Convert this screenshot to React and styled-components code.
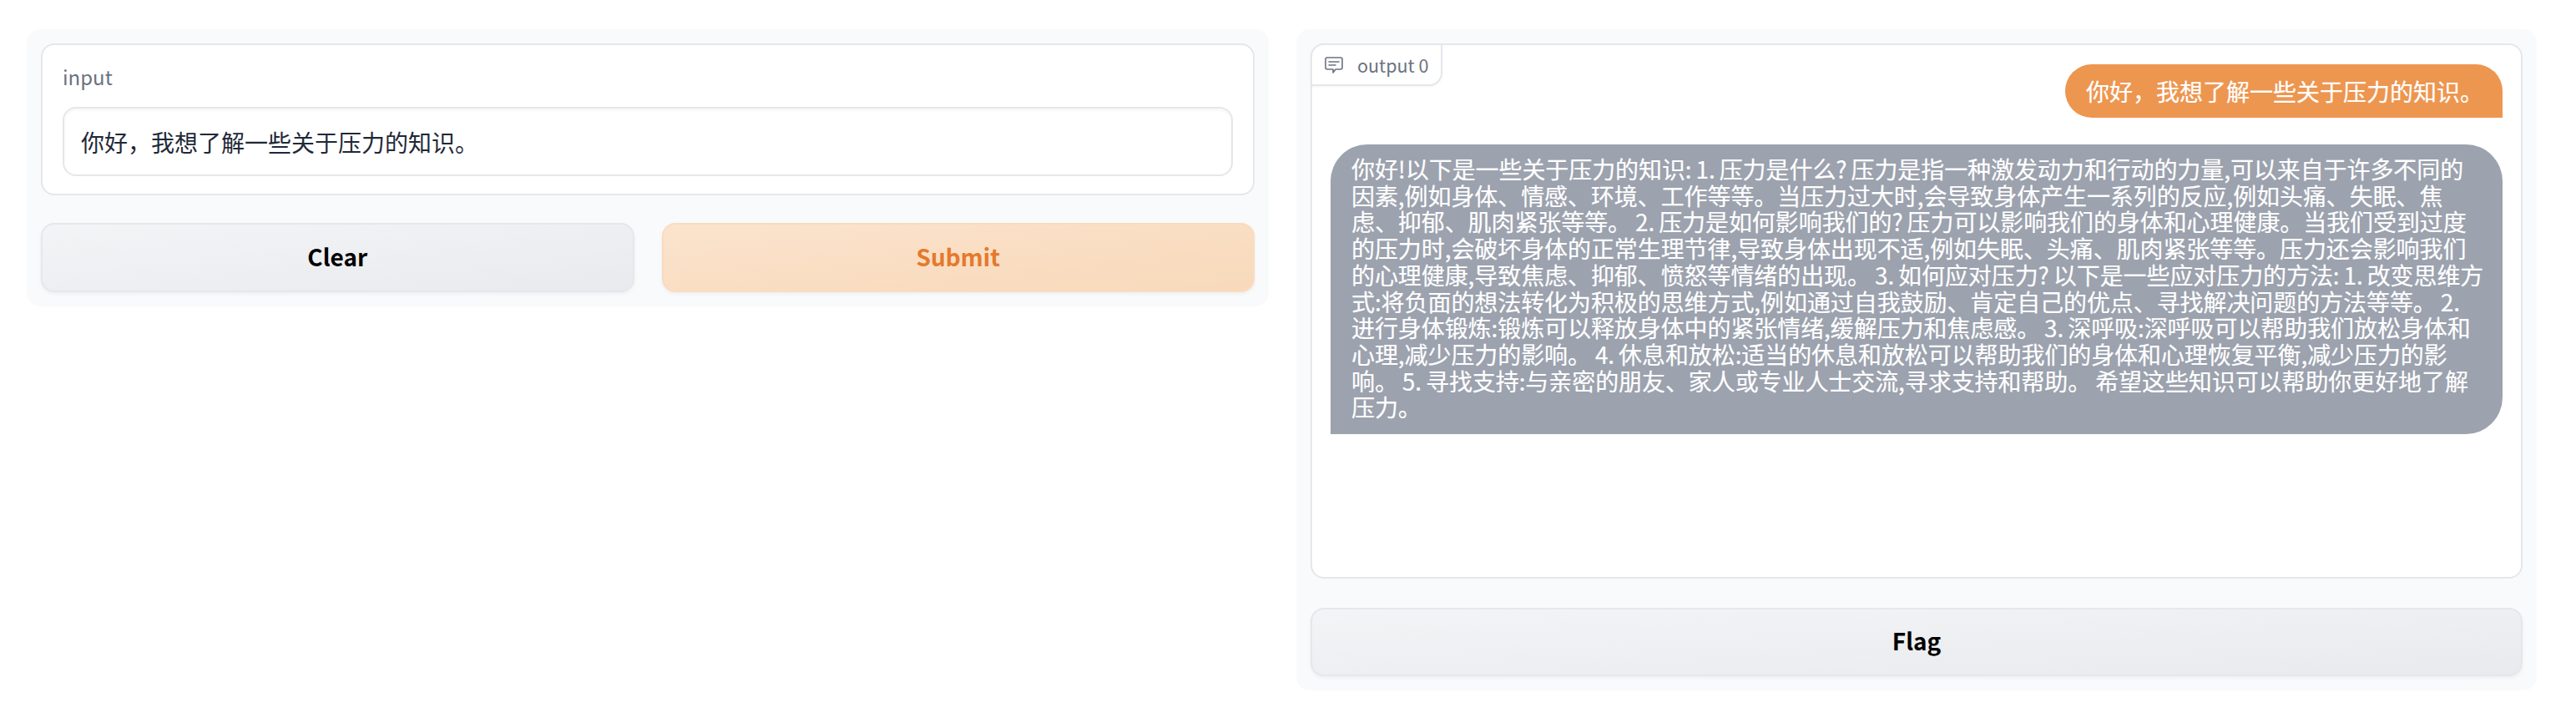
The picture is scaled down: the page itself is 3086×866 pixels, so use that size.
import React from "react";
import styled, { createGlobalStyle } from "styled-components";

const Global = createGlobalStyle`
  html, body { margin: 0; padding: 0; background: #fff; }
  * { box-sizing: border-box; }
`;

const FONT = `"Noto Sans CJK SC", "Noto Sans", sans-serif`;

const Page = styled.div`
  position: relative;
  width: 3086px;
  height: 866px;
  overflow: hidden;
  padding: 35px 47px 0 32px;
  display: grid;
  grid-template-columns: 1488px 1486px;
  column-gap: 33px;
  align-items: start;
  font-family: ${FONT};
  background: #fff;
`;

const Panel = styled.section`
  display: flex;
  flex-direction: column;
  padding: 17px;
  background: #f9fafb;
  border-radius: 16px;
`;

const InputCard = styled.div`
  height: 182px;
  padding: 21px 24px 21px;
  background: #fff;
  border: 2px solid #e5e7eb;
  border-radius: 16px;
  display: flex;
  flex-direction: column;
  justify-content: space-between;
`;

const Label = styled.label`
  display: block;
  font-size: 24px;
  line-height: 34px;
  color: #6b7280;
`;

const TextBox = styled.div`
  height: 83px;
  padding: 0 20px;
  display: flex;
  align-items: center;
  font-size: 28px;
  color: #1f2937;
  background: #fff;
  border: 2px solid #e5e7eb;
  border-radius: 16px;
  box-shadow: inset 0 2px 4px rgba(0, 0, 0, 0.04);
`;

const ButtonRow = styled.div`
  margin-top: 33px;
  display: grid;
  grid-template-columns: 1fr 1fr;
  column-gap: 33px;
`;

const Button = styled.button`
  height: ${(p) => p.$h || 83}px;
  padding: 0 0 4px;
  font-family: ${FONT};
  font-size: 28px;
  font-weight: 700;
  color: ${(p) => (p.$primary ? "#e5792c" : "#000")};
  background: ${(p) =>
    p.$primary
      ? "linear-gradient(to bottom right, #fbe3cd, #f8d9ba)"
      : "linear-gradient(to bottom right, #f3f4f6, #e9eaed)"};
  border: 2px solid ${(p) => (p.$primary ? "#f9dcc0" : "#e5e7eb")};
  border-radius: 16px;
  box-shadow: 0 2px 4px rgba(0, 0, 0, 0.05);
`;

const OutputCard = styled.div`
  position: relative;
  height: 641px;
  padding: 23px 22px 0 22px;
  background: #fff;
  border: 2px solid #e5e7eb;
  border-radius: 16px;
  display: flex;
  flex-direction: column;
  gap: 32px;
`;

const OutputTab = styled.div`
  position: absolute;
  top: -2px;
  left: -2px;
  width: 158px;
  height: 51px;
  display: flex;
  align-items: center;
  gap: 17px;
  padding-left: 15px;
  font-size: 21.5px;
  color: #6b7280;
  background: #fff;
  border: 2px solid #e5e7eb;
  border-top-left-radius: 16px;
  border-bottom-right-radius: 16px;
  box-shadow: 0 1px 3px rgba(0, 0, 0, 0.05);
`;

const UserBubble = styled.div`
  align-self: flex-end;
  padding: 16px 23px 16px 25px;
  font-size: 28px;
  line-height: 32px;
  color: #fff;
  -webkit-text-stroke: 0.2px #fff;
  background: #ed9650;
  border-radius: 32px 32px 0 32px;
`;

const BotBubble = styled.div`
  height: 347px;
  padding: 14px 25px;
  font-size: 28px;
  line-height: 31.7px;
  letter-spacing: -0.08px;
  word-spacing: -1.2px;
  color: #fff;
  -webkit-text-stroke: 0.2px #fff;
  background: #9ca2ae;
  border-radius: 44px 44px 44px 0;
`;

const Line = styled.div`
  white-space: nowrap;
`;

const FlagRow = styled.div`
  margin-top: 35px;
  display: grid;
`;

const WatermarkLayer = styled.div`
  position: absolute;
  inset: 0;
  overflow: hidden;
  pointer-events: none;
`;

const Mark = styled.div`
  position: absolute;
  transform: rotate(-45deg);
  transform-origin: 0 0;
  font-family: "Liberation Sans", Arial, sans-serif;
  font-size: 32px;
  line-height: 37.7px;
  white-space: pre;
  color: rgba(0, 0, 0, 0.016);
`;

const lines = [
  "你好!以下是一些关于压力的知识: 1. 压力是什么? 压力是指一种激发动力和行动的力量,可以来自于许多不同的",
  "因素,例如身体、情感、环境、工作等等。当压力过大时,会导致身体产生一系列的反应,例如头痛、失眠、焦",
  "虑、抑郁、肌肉紧张等等。 2. 压力是如何影响我们的? 压力可以影响我们的身体和心理健康。当我们受到过度",
  "的压力时,会破坏身体的正常生理节律,导致身体出现不适,例如失眠、头痛、肌肉紧张等等。压力还会影响我们",
  "的心理健康,导致焦虑、抑郁、愤怒等情绪的出现。 3. 如何应对压力? 以下是一些应对压力的方法: 1. 改变思维方",
  "式:将负面的想法转化为积极的思维方式,例如通过自我鼓励、肯定自己的优点、寻找解决问题的方法等等。 2.",
  "进行身体锻炼:锻炼可以释放身体中的紧张情绪,缓解压力和焦虑感。 3. 深呼吸:深呼吸可以帮助我们放松身体和",
  "心理,减少压力的影响。 4. 休息和放松:适当的休息和放松可以帮助我们的身体和心理恢复平衡,减少压力的影",
  "响。 5. 寻找支持:与亲密的朋友、家人或专业人士交流,寻求支持和帮助。 希望这些知识可以帮助你更好地了解",
  "压力。",
];

const QUESTION = "你好\uFF0C我想了解一些关于压力的知识。";

const marks = [];
for (let i = -8; i <= 8; i++) {
  for (let j = -4; j <= 12; j++) {
    const x = 326 + i * 186 + j * 194;
    const y = 597 + i * 186.5 - j * 193;
    if (x > -300 && x < 3200 && y > -100 && y < 1200) marks.push({ x, y, k: `${i}:${j}` });
  }
}

const ChatIcon = () => (
  <svg width="22" height="20" viewBox="0 0 22 20" fill="none" stroke="#6b7280" strokeWidth="1.6" strokeLinecap="round" strokeLinejoin="round">
    <path d="M3 1h16a2 2 0 0 1 2 2v10a2 2 0 0 1-2 2h-6l-3 4v-4H3a2 2 0 0 1-2-2V3a2 2 0 0 1 2-2z" />
    <path d="M5 6h12M5 10h8" />
  </svg>
);

export default function App() {
  return (
    <Page>
      <Global />
      <Panel>
        <InputCard>
          <Label>input</Label>
          <TextBox>{QUESTION}</TextBox>
        </InputCard>
        <ButtonRow>
          <Button>Clear</Button>
          <Button $primary>Submit</Button>
        </ButtonRow>
      </Panel>
      <Panel>
        <OutputCard>
          <OutputTab>
            <ChatIcon />
            output 0
          </OutputTab>
          <UserBubble>{QUESTION}</UserBubble>
          <BotBubble>
            {lines.map((l) => (
              <Line key={l}>{l}</Line>
            ))}
          </BotBubble>
        </OutputCard>
        <FlagRow>
          <Button $h={82}>Flag</Button>
        </FlagRow>
      </Panel>
      <WatermarkLayer>
        {marks.map((m) => (
          <Mark key={m.k} style={{ left: m.x, top: m.y }}>
            {"06DD8F5F5E\nD854D8B2A4\nF4471867813\nF"}
          </Mark>
        ))}
      </WatermarkLayer>
    </Page>
  );
}
